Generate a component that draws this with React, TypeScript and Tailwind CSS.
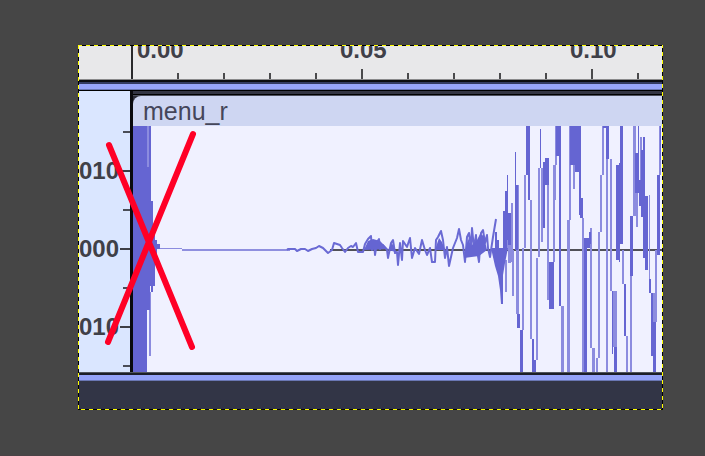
const timeTicks = [
  { id: 1, major: false },
  { id: 2, major: false },
  { id: 3, major: false },
  { id: 4, major: false },
  { id: 5, major: true },
  { id: 6, major: false },
  { id: 7, major: false },
  { id: 8, major: false },
  { id: 9, major: false },
  { id: 10, major: true },
  { id: 11, major: false },
];

const levels = [
  { id: 1, label: '' },
  { id: 2, label: '010' },
  { id: 3, label: '' },
  { id: 4, label: '000' },
  { id: 5, label: '' },
  { id: 6, label: '010' },
  { id: 7, label: '' },
];

// [x, top, width, bottom]
const lightBars = [
  [147, 126, 2, 167], [149, 292, 2, 356], [158, 248, 24, 249],
  [511, 203, 2, 262], [512, 250, 2, 296], [505, 260, 2, 292], [508, 250, 3, 263],
  [506, 240, 6, 250], [516, 185, 3, 314], [522, 248, 2, 330], [524, 175, 2, 248],
  [530, 200, 2, 339], [536, 258, 2, 360], [538, 168, 2, 257], [541, 168, 2, 242],
  [547, 185, 2, 300], [553, 165, 2, 262], [555, 126, 2, 165], [554, 165, 2, 200],
  [561, 306, 3, 373], [567, 220, 3, 373], [569, 126, 2, 220], [573, 165, 2, 189],
  [582, 218, 2, 373], [590, 228, 2, 348], [592, 348, 3, 373], [596, 358, 2, 373],
  [598, 232, 2, 358], [600, 175, 2, 232], [602, 126, 2, 175], [606, 159, 2, 373],
  [610, 159, 2, 291], [612, 291, 5, 347], [622, 250, 2, 284], [626, 336, 2, 373],
  [630, 276, 2, 373], [633, 126, 3, 216], [636, 193, 2, 227], [640, 137, 2, 180],
  [653, 293, 3, 322], [655, 250, 2, 322], [659, 126, 2, 175], [649, 195, 1, 279],
];

const solidBars = [
  [133, 126, 14, 373], [147, 167, 3, 310], [149, 126, 2, 286], [151, 201, 2, 292], [153, 226, 2, 286],
  [155, 240, 2, 254], [157, 244, 3, 249],
  [495, 232, 2, 262], [497, 240, 2, 262], [503, 211, 2, 250], [505, 191, 2, 250], [507, 175, 1, 240],
  [508, 213, 3, 245], [515, 152, 1, 250], [516, 185, 2, 250], [517, 314, 3, 328],
  [520, 330, 3, 373], [526, 126, 4, 175], [528, 175, 2, 200], [532, 339, 2, 373],
  [534, 360, 2, 373], [540, 129, 1, 168], [543, 162, 2, 228], [545, 158, 4, 185],
  [549, 262, 5, 309], [556, 126, 5, 156], [559, 156, 2, 306], [570, 126, 10, 165],
  [575, 165, 4, 172], [579, 126, 2, 215], [580, 198, 3, 218], [584, 238, 3, 373],
  [587, 238, 3, 248], [589, 232, 2, 244], [603, 126, 6, 128], [606, 126, 3, 159],
  [614, 347, 3, 373], [612, 291, 1, 354], [616, 165, 3, 260], [619, 163, 1, 262],
  [620, 126, 3, 244], [624, 284, 2, 336], [630, 216, 3, 276], [635, 153, 4, 193],
  [638, 126, 1, 153], [639, 180, 3, 206], [641, 150, 2, 217], [643, 137, 2, 258],
  [645, 196, 3, 270], [649, 279, 2, 293], [651, 293, 2, 356], [653, 322, 3, 373],
  [657, 175, 3, 255], [660, 126, 1, 160],
];

const quietPart =
  '287,250 288,249 295,249 297,251 301,249 305,249 308,251 312,249 316,248 319,246 323,248 328,253 332,250 334,243 340,245 342,248 345,252 348,248 351,246 353,247 356,243 358,252 363,252 365,244 368,239 371,236 372,250 374,243 375,255 377,242 379,239 380,249 383,245 387,250 388,258 391,243 393,240 395,253 397,252 398,265 400,243 402,260 403,241 407,247 410,238 412,258 415,248 419,254 422,240 425,250 427,255 430,248 432,262 435,262 436,240 438,237 441,231 443,240 445,258 447,247 449,266 451,257 453,248 457,238 459,229 461,240 463,245 465,262 467,237 469,233 471,248 472,228 474,248 476,235 477,250 479,262 481,233 483,230 485,243 487,235 488,248 490,257 493,237 496,219';

const Waveform = () => (
  <svg className="block w-full h-[246px]" viewBox="133 126 529 246" preserveAspectRatio="none">
    <rect x="133" y="126" width="529" height="246" fill="#f0f1ff" />
    <rect x="330" y="249" width="332" height="2" fill="#515158" />
    <rect x="182" y="249" width="108" height="2" fill="#8f8fdf" />
    {lightBars.map(([x, top, width, bottom]) => (
      <rect key={`${x}-${top}`} x={x} y={top} width={width} height={bottom - top} fill="#8c8cdf" />
    ))}
    {solidBars.map(([x, top, width, bottom]) => (
      <rect key={`${x}-${top}`} x={x} y={top} width={width} height={bottom - top} fill="#6565d2" />
    ))}
    <polygon points="491,248 495,266 498,276 500,290 501,304 503,304 503,275 505,263 508,248" fill="#6565d2" />
    <polyline points={quietPart} fill="none" stroke="#6a6ad4" strokeWidth="2" strokeLinejoin="round" />
    {/* Denser body of the louder half */}
    <path
      d="M364 250L368 241L373 239L380 241L388 249ZM388 250L392 243L396 252ZM435 250L439 238L442 242L445 250ZM464 258L468 238L471 246L477 240L480 234L484 236L487 250L479 256Z"
      fill="#6565d2"
    />
  </svg>
);

const TimeRuler = () => (
  <div className="flex h-[34px] overflow-hidden bg-[#e8e8ea] border-b border-[#8a8a8c]">
    <div className="w-[52px] shrink-0" />
    <div className="flex-1 min-w-0 flex flex-col justify-end gap-[7px] border-l-2 border-[#2a2a2c] overflow-hidden">
      <div className="flex shrink-0 pl-1 text-[24px] leading-6 font-bold text-[#3f4048]">
        <span className="w-[203px] shrink-0">0.00</span>
        <span className="w-[230px] shrink-0">0.05</span>
        <span className="shrink-0">0.10</span>
      </div>
      <div className="flex items-end shrink-0 h-[10px] pl-11">
        {timeTicks.map((tick) => (
          <div
            key={tick.id}
            className={`w-[46px] shrink-0 border-l-2 border-[#4a4a4c] ${tick.major ? 'h-[10px]' : 'h-[6px]'}`}
          />
        ))}
      </div>
    </div>
  </div>
);

const LevelRuler = () => (
  <div className="w-[51px] shrink-0 pt-[21px] bg-[#dae6ff] text-[24px] leading-6 text-[#3f4048] overflow-hidden">
    {levels.map((level) => (
      <div key={level.id} className="flex items-center h-[39px]">
        <span className="w-[41px] shrink-0 font-bold">{level.label}</span>
        {level.label ? (
          <div className="flex-1 h-0.5 bg-[#3c3e46]" />
        ) : (
          <div className="w-[7px] ml-auto h-0.5 bg-[#4a4d57]" />
        )}
      </div>
    ))}
  </div>
);

const App = () => {
  return (
    <div className="min-h-screen bg-[#464646] border-b border-[#4a4246] pt-[45px] pl-[78px] pr-[42px] pb-[45px] font-['Liberation_Sans',Arial,sans-serif]">
      <div className="relative p-px">
        <TimeRuler />

        {/* Track divider */}
        <div className="h-0.5 bg-[#0c0c12]" />
        <div className="h-0.5 bg-[#333a62]" />
        <div className="h-[5px] bg-[#98a5fb]" />
        <div className="h-px bg-[#6c78b8]" />
        <div className="h-px bg-black" />

        {/* Track */}
        <div className="flex h-[281px] overflow-hidden">
          <LevelRuler />
          <div className="flex-1 min-w-0 border-l-3 border-[#0a0a0e] bg-[#2b2c38]">
            <div className="h-[3px] bg-[#333543]" />
            <div className="h-px bg-black" />
            <div className="h-px bg-[#4c4f5c]" />
            <div className="flex items-center h-[30px] pl-[10px] rounded-tl-lg bg-[#ced6f2] text-[25px] leading-6 text-[#45465a]">
              menu_r
            </div>
            <Waveform />
          </div>
        </div>

        {/* Bottom edge */}
        <div className="h-px bg-[#50545c]" />
        <div className="h-0.5 bg-[#1c1e28]" />
        <div className="h-[5px] bg-[#94a2f8]" />
        <div className="h-px bg-[#6a77b4]" />
        <div className="h-7 bg-[#323546]" />

        {/* Red cross over the clipped start */}
        <svg className="absolute top-0 left-0" width="130" height="320" viewBox="78 45 130 320">
          <path d="M109 145L192 347M193 134L108 342" stroke="#ff0026" strokeWidth="6" strokeLinecap="round" />
        </svg>

        {/* Selection outline */}
        <svg className="absolute inset-0 w-full h-full overflow-hidden">
          <rect width="100%" height="100%" fill="none" stroke="#000000" strokeWidth="2" />
          <rect width="100%" height="100%" fill="none" stroke="#ffff00" strokeWidth="2" strokeDasharray="4 4" />
        </svg>
      </div>
    </div>
  );
};

export default App;
